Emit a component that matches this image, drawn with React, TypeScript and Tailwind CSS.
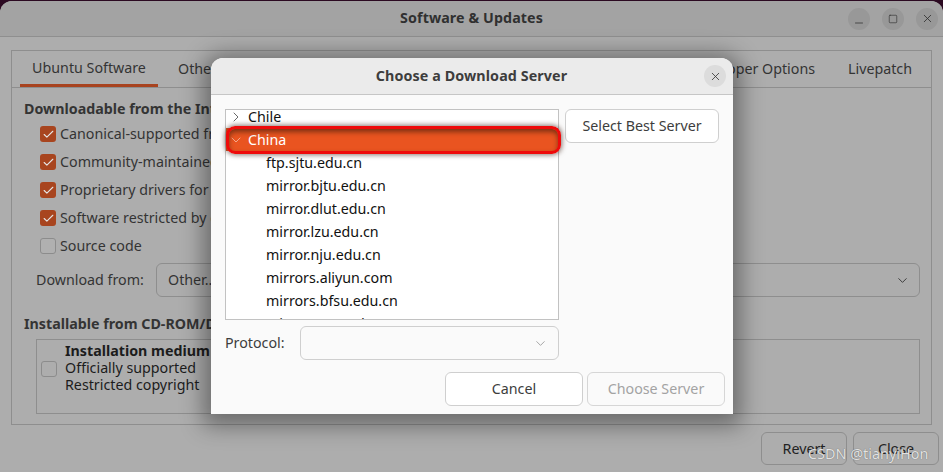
import { ChevronDown, ChevronRight, Check, X, Minus, Square } from "lucide-react";

type CheckProps = {
  label: string;
  checked?: boolean;
};

const mirrors = [
  "ftp.sjtu.edu.cn",
  "mirror.bjtu.edu.cn",
  "mirror.dlut.edu.cn",
  "mirror.lzu.edu.cn",
  "mirror.nju.edu.cn",
  "mirrors.aliyun.com",
  "mirrors.bfsu.edu.cn",
  "mirrors.cqu.edu.cn",
];

function CheckRow({ label, checked }: CheckProps) {
  return (
    <div className="flex items-center gap-[4px] h-[28px] pl-[16px]">
      {checked ? (
        <span className="w-[16px] h-[16px] rounded-[3px] bg-[#a8451f] flex items-center justify-center">
          <Check size={13} strokeWidth={2} className="text-[#e6e6e6]" />
        </span>
      ) : (
        <span className="w-[16px] h-[16px] rounded-[3px] border border-[#8c8c8c] bg-[#b0b0b0]" />
      )}
      <span className="whitespace-nowrap pb-[1px]">{label}</span>
    </div>
  );
}

function WinButton({ children }: { children: React.ReactNode }) {
  return (
    <span className="w-[22px] h-[22px] rounded-full bg-[#989898] flex items-center justify-center text-[#2e2e2e]">
      {children}
    </span>
  );
}

function Dialog() {
  return (
    <div className="absolute left-[211px] top-[58px] w-[522px] h-[356px] rounded-t-[12px] bg-[#fafafa] shadow-[0_4px_22px_8px_rgba(0,0,0,0.38)] flex flex-col text-[#3d3d3d]">
      <div className="h-[37px] shrink-0 rounded-t-[12px] bg-[#ebebeb] border-b border-[#c6c6c6] flex items-center justify-center relative">
        <span className="font-bold text-[14.3px] tracking-[0.1px] text-[#3d3d3d] -ml-[1px]">Choose a Download Server</span>
        <span className="absolute right-[7px] top-[7px] w-[22px] h-[22px] rounded-full bg-[#dcdcdc] flex items-center justify-center">
          <X size={13} strokeWidth={1.5} className="text-[#333]" />
        </span>
      </div>
      <div className="flex gap-[6px] pl-[14px] pt-[14px]">
        <div className="relative w-[334px] h-[211px]">
          <div className="w-full h-full border border-[#c2c2c2] bg-white overflow-hidden text-[#111]">
            <div className="-mt-[5px]">
              <div className="h-[23px] flex items-center">
                <ChevronRight size={16} strokeWidth={1.1} className="ml-[2px] text-[#333]" />
                <span className="ml-[4px]">Chile</span>
              </div>
              <div className="h-[23px] flex items-center bg-[#e95420] text-white">
                <ChevronDown size={16} strokeWidth={1.1} className="ml-[2px] text-[#f7c8b5]" />
                <span className="ml-[4px]">China</span>
              </div>
              {mirrors.map((m) => (
                <div key={m} className="h-[23px] flex items-center pl-[40px]">
                  {m}
                </div>
              ))}
            </div>
          </div>
          {/* red marker drawn over the selected row */}
          <div className="absolute left-[1px] top-[17px] w-[335px] h-[28px] rounded-[9px] border-[3px] border-[#ee0a0a] shadow-[0_0_5px_1px_rgba(60,30,20,0.6),inset_0_3px_5px_rgba(70,30,10,0.65)]" />
        </div>
        <button className="w-[154px] h-[34px] rounded-[6px] border border-[#cfcfcf] bg-white text-[#3d3d3d] pb-[1px]">
          Select Best Server
        </button>
      </div>
      <div className="flex items-center pl-[14px] mt-[6px]">
        <span className="w-[75px] pb-[1px]">Protocol:</span>
        <div className="w-[259px] h-[34px] rounded-[6px] border border-[#cfcfcf] flex items-center justify-end pr-[10px]">
          <ChevronDown size={15} strokeWidth={1.2} className="text-[#8a8a8a]" />
        </div>
      </div>
      <div className="flex justify-end gap-[4px] pr-[8px] mt-[12px]">
        <button className="w-[138px] h-[34px] rounded-[6px] border border-[#cfcfcf] bg-white pb-[1px]">Cancel</button>
        <button className="w-[138px] h-[34px] rounded-[6px] border border-[#d6d6d6] text-[#a3a3a3] pb-[1px]">Choose Server</button>
      </div>
    </div>
  );
}

export default function App() {
  return (
    <div
      className="relative w-[943px] h-[472px] overflow-hidden bg-[#2c0a22] pt-[1px] text-[14.25px] text-[#343434]"
      style={{ fontFamily: '"Noto Sans", sans-serif' }}
    >
      <div className="h-[471px] rounded-t-[12px] bg-[#adadad] flex flex-col">
        <div className="h-[36px] shrink-0 rounded-t-[12px] bg-[#a3a3a3] border-b border-[#8f8f8f] flex items-center pl-[95px] pr-[5px]">
          <span className="flex-1 text-center font-bold text-[#303030] tracking-[0.1px] pb-[1px]">Software &amp; Updates</span>
          <div className="flex gap-[12px]">
            <WinButton>
              <Minus size={12} strokeWidth={1.5} className="mt-[8px]" />
            </WinButton>
            <WinButton>
              <Square size={10} strokeWidth={1.5} />
            </WinButton>
            <WinButton>
              <X size={13} strokeWidth={1.5} />
            </WinButton>
          </div>
        </div>
        <div className="mx-[11px] mt-[13px] w-[921px] h-[375px] border border-[#8e8e8e] flex flex-col">
          <div className="h-[37px] shrink-0 border-b border-[#8e8e8e] flex pl-[8px] pr-[19px]">
            <div className="w-[138px] h-[36px] border-b-[3px] border-[#a8431f] flex items-center justify-center pt-[1px]">Ubuntu Software</div>
            <div className="ml-[20px] flex items-center">Other Software</div>
            <div className="ml-auto flex items-center">Developer Options</div>
            <div className="ml-[33px] flex items-center">Livepatch</div>
          </div>
          <div className="pl-[12px] pr-[11px] pt-[11px]">
            <div className="font-bold h-[20px] leading-[20px] mb-[1px]">Downloadable from the Internet</div>
            <CheckRow label="Canonical-supported free and open-source software (main)" checked />
            <CheckRow label="Community-maintained free and open-source software (universe)" checked />
            <CheckRow label="Proprietary drivers for devices (restricted)" checked />
            <CheckRow label="Software restricted by copyright or legal issues (multiverse)" checked />
            <CheckRow label="Source code" />
            <div className="flex items-center h-[34px] mt-[3px] pl-[12px]">
              <span className="w-[120px] pb-[1px]">Download from:</span>
              <div className="flex-1 h-[34px] rounded-[6px] border border-[#8e8e8e] flex items-center justify-between pl-[11px] pr-[9px]">
                <span className="pb-[1px]">Other...</span>
                <ChevronDown size={15} strokeWidth={1.4} className="text-[#2e2e2e]" />
              </div>
            </div>
            <div className="font-bold h-[20px] leading-[20px] mt-[17px]">Installable from CD-ROM/DVD</div>
            <div className="ml-[12px] mt-[5px] h-[75px] border border-[#8e8e8e] flex items-start pt-[2px] pl-[4px] gap-[8px]">
              <span className="mt-[19px] w-[16px] h-[16px] rounded-[3px] border border-[#8c8c8c]" />
              <div className="leading-[17px] text-[#1c1c1c]">
                <div className="font-bold">Installation medium</div>
                <div>Officially supported</div>
                <div>Restricted copyright</div>
              </div>
            </div>
          </div>
        </div>
        <div className="flex justify-end gap-[6px] pr-[4px] mt-[7px]">
          <button className="w-[86px] h-[33px] rounded-[6px] border border-[#8e8e8e] text-[#222]">Revert</button>
          <button className="w-[86px] h-[33px] rounded-[6px] border border-[#8e8e8e] text-[#222]">Close</button>
        </div>
      </div>
      <Dialog />
      <span className="absolute left-[808px] top-[443px] text-[14.4px] text-[#e2e2e2] [text-shadow:0_0_1px_#555]">CSDN @tianyiHon</span>
    </div>
  );
}
